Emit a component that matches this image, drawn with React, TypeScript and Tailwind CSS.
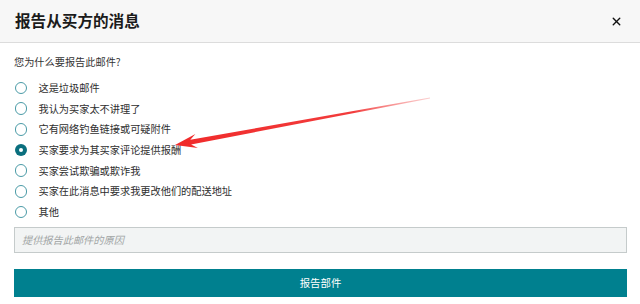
import React from "react";
import { X } from "lucide-react";

const reasons = [
    "这是垃圾邮件",
    "我认为买家太不讲理了",
    "它有网络钓鱼链接或可疑附件",
    "买家要求为其买家评论提供报酬",
    "买家尝试欺骗或欺诈我",
    "买家在此消息中要求我更改他们的配送地址",
    "其他",
];

const Radio = ({ checked }: { checked: boolean }) =>
    checked ? (
        <div className="w-[12.5px] h-[12.5px] rounded-full bg-[#0a6f7e] flex items-center justify-center shrink-0">
            <div className="w-[4px] h-[4px] rounded-full bg-white" />
        </div>
    ) : (
        <div className="w-[12.5px] h-[12.5px] rounded-full border-[1.5px] border-[#4b9ba7] bg-white shrink-0" />
    );

const App = () => {
    return (
        <div
            className="relative w-[640px] h-[304px] bg-white overflow-hidden text-[#333]"
            style={{ fontFamily: '"Noto Sans CJK SC", "Noto Sans", sans-serif' }}
        >
            {/* Header */}
            <div className="h-[43px] bg-[#f7f7f7] border-b border-[#dcdcdc] flex items-center justify-between pl-[15px] pr-[17px]">
                <h1 className="text-[15.6px] font-bold text-[#1b1b1b] leading-none">报告从买方的消息</h1>
                <X className="w-[13px] h-[13px] text-[#111]" strokeWidth={2.6} />
            </div>

            <div className="px-[14px] pr-[13px]">
                <p className="pt-[12px] text-[10.2px] leading-[14px] text-[#333]">您为什么要报告此邮件?</p>

                {/* Options */}
                <div className="mt-[8.6px] flex flex-col">
                    {reasons.map((r, i) => (
                        <div key={r} className="h-[20.7px] flex items-center gap-[11.5px] pl-[0.5px]">
                            <Radio checked={i === 3} />
                            <span className="text-[10.2px] leading-none text-[#2e2e2e]">{r}</span>
                        </div>
                    ))}
                </div>

                <div className="mt-[4.5px] h-[26px] bg-[#f2f4f4] border border-[#c5cbcb] flex items-center px-[7px]">
                    <span className="text-[10.2px] italic text-[#a0a4a4]">提供报告此邮件的原因</span>
                </div>

                <button className="mt-[16px] w-full h-[28px] bg-[#00808f] text-white text-[10.4px] flex items-center justify-center">
                    报告部件
                </button>
            </div>

            {/* Annotation arrow */}
            <svg className="absolute left-0 top-0 pointer-events-none" width="640" height="304">
                <defs>
                    <linearGradient id="arr" x1="175" y1="145" x2="430" y2="98" gradientUnits="userSpaceOnUse">
                        <stop offset="0" stopColor="#f02a2a" />
                        <stop offset="0.7" stopColor="#f23c3c" />
                        <stop offset="1" stopColor="#f7a0a0" stopOpacity="0.5" />
                    </linearGradient>
                </defs>
                <polygon
                    points="175,145 197.9,147.9 191.1,144.4 430,98.4 430,97.6 190.3,139.8 195.4,134.1"
                    fill="url(#arr)"
                />
            </svg>
        </div>
    );
};

export default App;
